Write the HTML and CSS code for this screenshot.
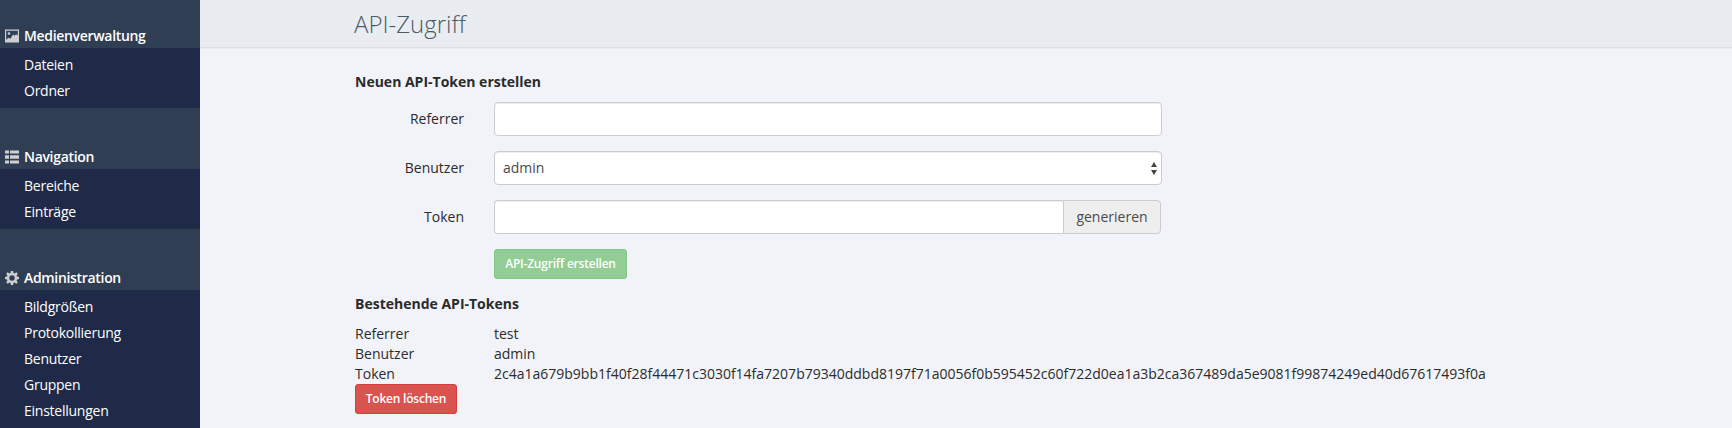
FILE: index.html
```html
<!DOCTYPE html>
<html lang="de">
<head>
<meta charset="utf-8">
<title>API-Zugriff</title>
<link rel="stylesheet" href="styles.css">
</head>
<body>
<div class="layout">
  <nav class="sidebar">
    <h2 class="nav-head nav-head-first">
      <svg class="icon" viewBox="0 0 14 14"><path fill-rule="evenodd" d="M0 .5h14v13H0zM1.200 1.700v9l2.300-2 1.800 1 2.700-4.200 1.600 1.300 1.400-1.600 1.800 1.600V1.700z"/><circle cx="4" cy="4.500" r="1.300"/></svg>
      <span>Medienverwaltung</span>
    </h2>
    <ul class="nav-list"><li>Dateien</li><li>Ordner</li></ul>
    <h2 class="nav-head">
      <svg class="icon" viewBox="0 0 14 14"><path d="M0 .5h4v3H0zM5 .5h9v3H5zM0 5.200h4v3.500H0zM5 5.200h9v3.500H5zM0 10.500h4v3H0zM5 10.500h9v3H5z"/></svg>
      <span>Navigation</span>
    </h2>
    <ul class="nav-list"><li>Bereiche</li><li>Einträge</li></ul>
    <h2 class="nav-head">
      <svg class="icon" viewBox="0 0 14 14"><path fill-rule="evenodd" d="M5.900 0h2.200l.4 2 1.100.5 1.700-1.200 1.500 1.500-1.200 1.700.5 1.100 1.900.3v2.200l-1.900.4-.5 1.100 1.200 1.700-1.500 1.500-1.700-1.200-1.100.5-.4 1.900H5.900l-.4-1.900-1.100-.5-1.700 1.200-1.500-1.500 1.200-1.700-.5-1.100L0 8.100V5.900l1.900-.3.5-1.100L1.200 2.800l1.500-1.500 1.700 1.200L5.500 2zM7 4.300a2.700 2.700 0 1 0 0 5.400 2.700 2.700 0 0 0 0-5.400z"/></svg>
      <span>Administration</span>
    </h2>
    <ul class="nav-list"><li>Bildgrößen</li><li>Protokollierung</li><li>Benutzer</li><li>Gruppen</li><li>Einstellungen</li></ul>
  </nav>
  <main class="main">
    <header class="page-head"><h1>API-Zugriff</h1></header>
    <div class="content">
      <h3 class="title">Neuen API-Token erstellen</h3>
      <form class="form">
        <label class="label" for="referrer">Referrer</label>
        <input class="control" id="referrer" type="text">
        <label class="label" for="user">Benutzer</label>
        <div class="control select" id="user"><span>admin</span><svg class="arrows" viewBox="0 0 6 13"><path d="M3 0l3 5H0zM3 13l3-5H0z"/></svg></div>
        <label class="label" for="token">Token</label>
        <div class="group"><input class="control group-input" id="token" type="text"><span class="addon">generieren</span></div>
        <button class="btn btn-success" type="button">API-Zugriff erstellen</button>
      </form>
      <h3 class="title title-existing">Bestehende API-Tokens</h3>
      <dl class="tokens">
        <dt>Referrer</dt><dd>test</dd>
        <dt>Benutzer</dt><dd>admin</dd>
        <dt>Token</dt><dd class="hash">2c4a1a679b9bb1f40f28f44471c3030f14fa7207b79340ddbd8197f71a0056f0b595452c60f722d0ea1a3b2ca367489da5e9081f99874249ed40d67617493f0a</dd>
      </dl>
      <button class="btn btn-danger" type="button">Token löschen</button>
    </div>
  </main>
</div>
</body>
</html>
```
FILE: styles.css
```css
* { box-sizing: border-box; }
body { margin: 0; background: #f2f3f9; color: #2b2b2b; font: 14px/20px "Open Sans", sans-serif; overflow: hidden; }
h1, h2, h3, ul, dl, dd { margin: 0; padding: 0; }
.layout { display: flex; height: 428px; overflow: hidden; }
.sidebar { flex: 0 0 200px; background: #303e54; color: #fff; letter-spacing: -.25px; }
.nav-head { display: flex; align-items: flex-end; gap: 5px; height: 61px; padding: 0 5px 2px; font-size: 14px; line-height: 20px; font-weight: 600; letter-spacing: -.32px; }
.nav-head-first { height: 48px; }
.icon { width: 14px; height: 14px; margin-bottom: 3.500px; fill: #cdcfd3; }
.nav-list { list-style: none; padding: 4px 0 4px 24px; background: #1e2a48; }
.nav-list li { height: 26px; line-height: 26px; }
.main { flex: 1; min-width: 0; }
.page-head { height: 48px; padding-left: 154px; background: #e9edf2; border-bottom: 1px solid #dde1e7; box-shadow: 0 1px 0 #eaecf1; }
.page-head h1 { color: #4a5b66; font-size: 24px; line-height: 48px; font-weight: 300; letter-spacing: 0; }
.content { padding: 24px 0 0 155px; }
.title { font-size: 14px; line-height: 20px; font-weight: 700; }
.form { display: grid; grid-template-columns: 109px 668px; column-gap: 30px; row-gap: 15px; margin-top: 10px; }
.label { line-height: 34px; text-align: right; }
.control { width: 100%; height: 34px; padding: 6px 8px; border: 1px solid #ccc; border-radius: 4px; background: #fff; box-shadow: inset 0 1px 1px rgba(0,0,0,.075); color: #4a4a4a; font: inherit; }
.select { display: flex; align-items: center; justify-content: space-between; padding: 0 4px 0 8px; }
.arrows { width: 6px; height: 13px; fill: #444; }
.group { display: flex; width: 667px; }
.group-input { flex: 1; width: auto; min-width: 0; border-right: 0; border-radius: 4px 0 0 4px; }
.addon { width: 98px; height: 34px; border: 1px solid #ccc; border-radius: 0 4px 4px 0; background: #eee; color: #4a4a4a; line-height: 32px; text-align: center; }
.btn { display: block; height: 30px; padding: 0; border: 1px solid; border-radius: 3px; color: #fff; font: 600 12px/18px "Open Sans", sans-serif; letter-spacing: -.22px; }
.btn-success { grid-column: 2; width: 133px; background: #91cd94; border-color: #86c789; }
.btn-danger { width: 102px; background: #d9534f; border-color: #d43f3a; }
.title-existing { margin-top: 15px; }
.tokens { display: grid; grid-template-columns: 139px 1fr; margin-top: 10px; }
.hash { white-space: nowrap; }
```
